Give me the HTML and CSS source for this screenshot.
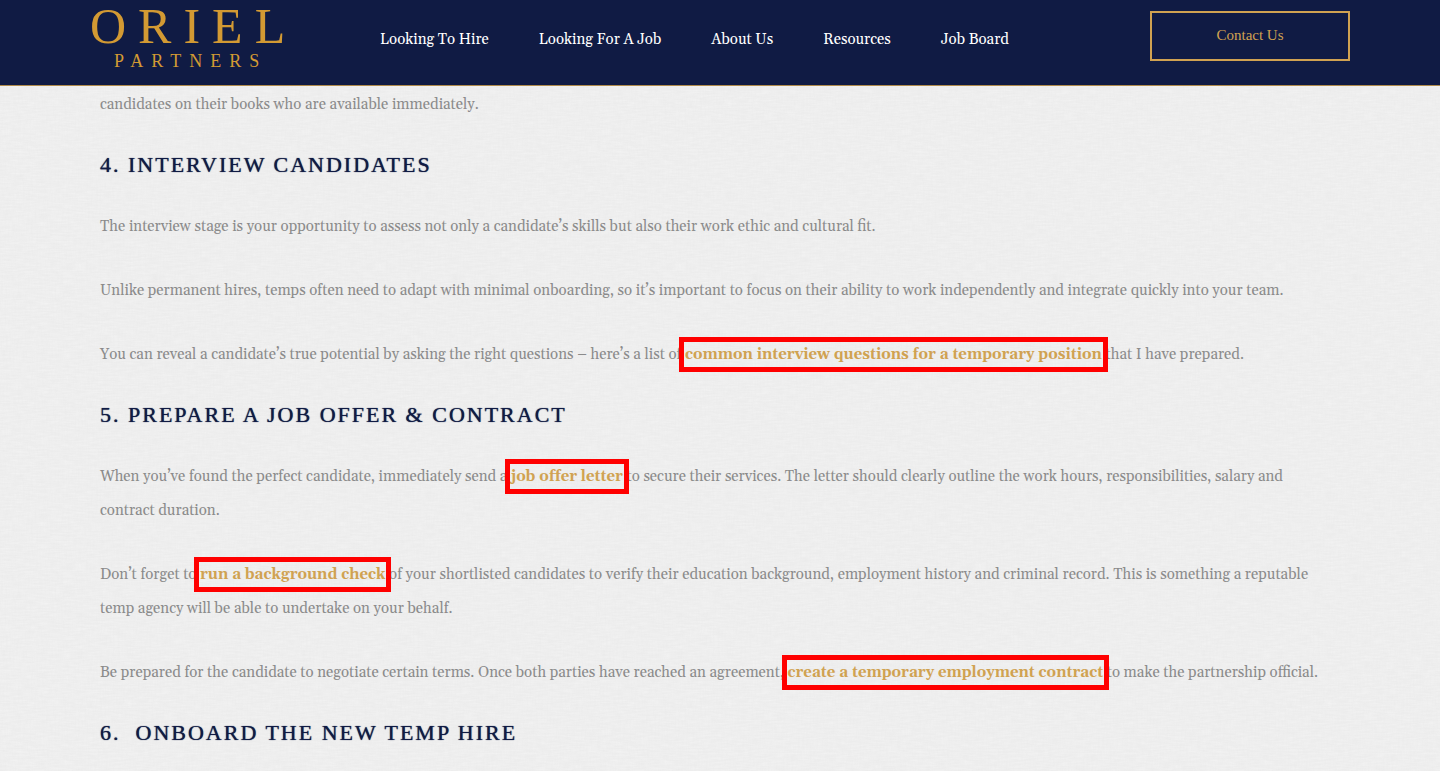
FILE: index.html
```html
<!DOCTYPE html>
<html lang="en">
<head>
    <meta charset="UTF-8">
    <meta name="viewport" content="width=device-width, initial-scale=1.0">
    <title>Oriel Partners</title>
    <link rel="stylesheet" href="styles.css">
</head>
<body>
    <header class="site-header">
        <a class="logo" href="#">
            <span class="logo-name">ORIEL</span>
            <span class="logo-sub">PARTNERS</span>
        </a>
        <nav class="main-nav">
            <a href="#">Looking To Hire</a>
            <a href="#">Looking For A Job</a>
            <a href="#">About Us</a>
            <a href="#">Resources</a>
            <a href="#">Job Board</a>
        </nav>
        <a class="contact-button" href="#">Contact Us</a>
    </header>

    <main class="article">
        <p>candidates on their books who are available immediately.</p>

        <h2>4. Interview Candidates</h2>
        <p>The interview stage is your opportunity to assess not only a candidate’s skills but also their work ethic and cultural fit.</p>
        <p>Unlike permanent hires, temps often need to adapt with minimal onboarding, so it’s important to focus on their ability to work independently and integrate quickly into your team.</p>
        <p>You can reveal a candidate’s true potential by asking the right questions – here’s a list of <a class="marked" href="#">common interview questions for a temporary position</a> that I have prepared.</p>

        <h2>5. Prepare a Job Offer &amp; Contract</h2>
        <p>When you’ve found the perfect candidate, immediately send a <a class="marked" href="#">job offer letter</a> to secure their services. The letter should clearly outline the work hours, responsibilities, salary and contract duration.</p>
        <p>Don’t forget to <a class="marked" href="#">run a background check</a> of your shortlisted candidates to verify their education background, employment history and criminal record. This is something a reputable temp agency will be able to undertake on your behalf.</p>
        <p>Be prepared for the candidate to negotiate certain terms. Once both parties have reached an agreement, <a class="marked" href="#">create a temporary employment contract</a> to make the partnership official.</p>

        <h2>6.&nbsp; Onboard the New Temp Hire</h2>
    </main>
</body>
</html>
```
FILE: styles.css
```css
body {
    margin: 0;
    font-family: Georgia, Gelasio, "Liberation Serif", serif;
    font-size: 15px;
    color: #8b8b8b;
    background-color: #ededed;
    /* linen texture */
    background-image: url("data:image/svg+xml,%3Csvg xmlns='http://www.w3.org/2000/svg' width='300' height='300'%3E%3Cfilter id='a'%3E%3CfeTurbulence type='fractalNoise' baseFrequency='.08 .6' numOctaves='2' stitchTiles='stitch'/%3E%3CfeColorMatrix values='0 0 0 0 1 0 0 0 0 1 0 0 0 0 1 1 0 0 0 -.3'/%3E%3C/filter%3E%3Cfilter id='b'%3E%3CfeTurbulence type='fractalNoise' baseFrequency='.6 .08' numOctaves='2' seed='4' stitchTiles='stitch'/%3E%3CfeColorMatrix values='0 0 0 0 .8 0 0 0 0 .8 0 0 0 0 .8 1 0 0 0 -.3'/%3E%3C/filter%3E%3Crect width='300' height='300' filter='url(%23a)' opacity='.5'/%3E%3Crect width='300' height='300' filter='url(%23b)' opacity='.5'/%3E%3C/svg%3E");
}

a {
    text-decoration: none;
}

.site-header {
    display: grid;
    grid-template-columns: 290px 1fr 200px;
    align-items: start;
    padding: 0 90px;
    background-color: #101b44;
    border-bottom: 1px solid #b08a4a;
}

.logo {
    display: flex;
    flex-direction: column;
    padding: 3px 0 12px;
    color: #d39a33;
    font-family: "Liberation Serif", serif;
}

.logo-name {
    font-size: 50px;
    line-height: 46px;
    letter-spacing: 12px;
}

.logo-sub {
    padding-left: 24px;
    font-size: 18px;
    line-height: 24px;
    letter-spacing: 8px;
}

.main-nav {
    display: flex;
    gap: 50px;
    padding-top: 29px;
    line-height: 22px;
}

.main-nav a {
    color: #fff;
    white-space: nowrap;
}

.contact-button {
    box-sizing: border-box;
    margin-top: 11px;
    padding: 11px 12px 13px;
    border: 2px solid #d0a251;
    color: #d0a251;
    font-family: "Liberation Serif", serif;
    font-size: 15px;
    line-height: 22px;
    text-align: center;
}

.article {
    padding: 2px 100px 0;
}

.article p {
    margin: 0 0 30px;
    line-height: 34px;
}

.article h2 {
    margin: 0 0 32px;
    color: #101b44;
    font-family: "Liberation Serif", serif;
    font-size: 22px;
    font-weight: normal;
    line-height: 26px;
    letter-spacing: 2px;
    text-shadow: 0 0 1px #101b44;
    text-transform: uppercase;
}

.marked {
    padding: 2px 0;
    color: #d0a251;
    font-weight: bold;
    outline: 5px solid #ff0000;
    outline-offset: 1px;
}
```
